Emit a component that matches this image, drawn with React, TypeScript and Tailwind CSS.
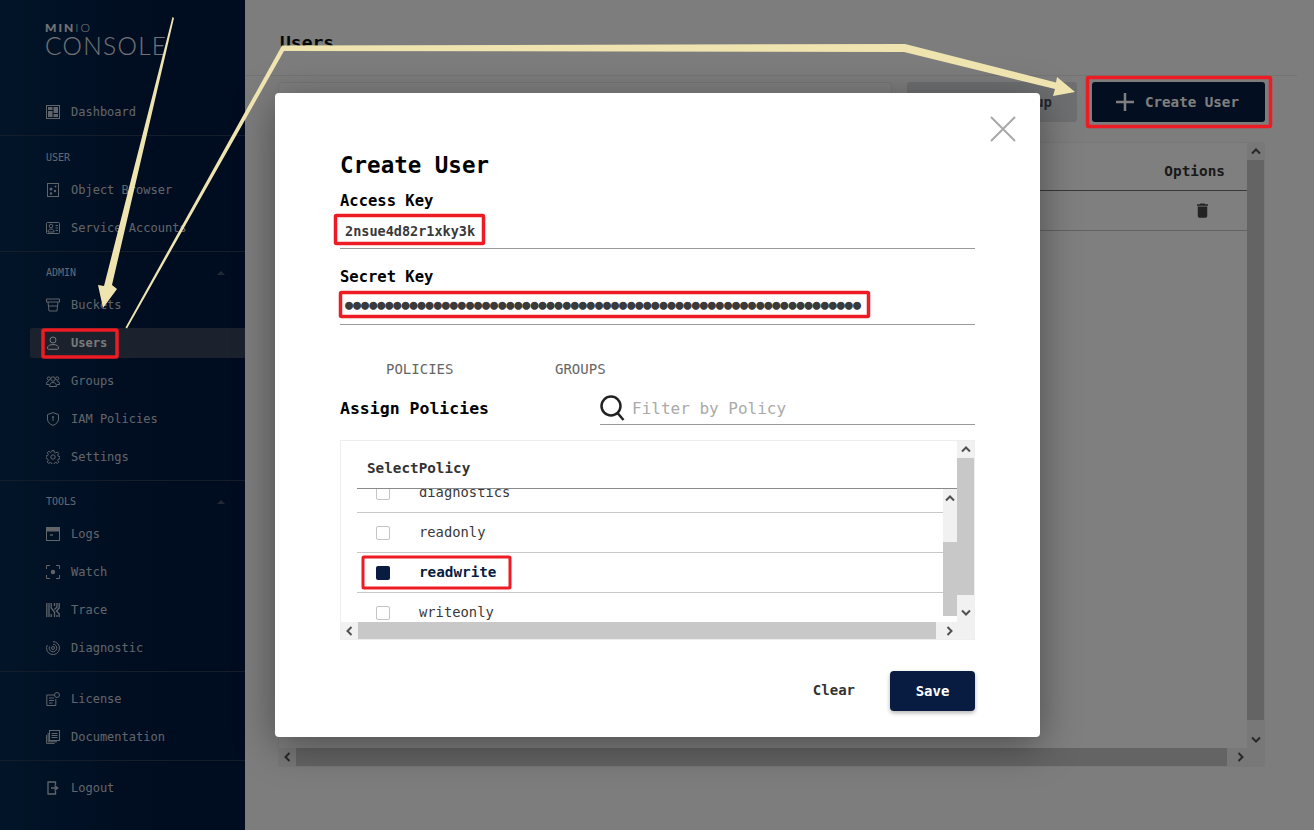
import React from "react";

const mono = "font-['DejaVu_Sans_Mono',monospace]";

const Ic = ({ children }: { children: React.ReactNode }) => (
  <svg viewBox="0 0 14 14" width="14" height="14" fill="none" stroke="currentColor" strokeWidth="1" className="shrink-0">
    {children}
  </svg>
);

const icons: Record<string, React.ReactNode> = {
  Dashboard: (<Ic><rect x="0.5" y="0.5" width="13" height="13" /><rect x="2" y="2" width="4.5" height="3" fill="currentColor" stroke="none" /><rect x="2" y="6" width="4.5" height="6" fill="currentColor" stroke="none" /><rect x="7.5" y="2" width="4.5" height="6" fill="currentColor" stroke="none" /><rect x="7.5" y="9" width="4.5" height="3" fill="currentColor" stroke="none" /></Ic>),
  "Object Browser": (<Ic><rect x="1.5" y="0.5" width="11" height="13" /><circle cx="5" cy="6" r="1.5" fill="currentColor" stroke="none" /><circle cx="9.5" cy="3.5" r="1" fill="currentColor" stroke="none" /><circle cx="9" cy="8" r="1.2" fill="currentColor" stroke="none" /><circle cx="5" cy="10.5" r="1.2" fill="currentColor" stroke="none" /></Ic>),
  "Service Accounts": (<Ic><rect x="0.5" y="1.5" width="13" height="11" rx="1" /><circle cx="5" cy="5" r="1.8" /><path d="M2 11c0-2 1.2-3 3-3s3 1 3 3z" /><path d="M9.5 4.5h2.5M9.5 7h2.5M9.5 9.5h2.5" /></Ic>),
  Buckets: (<Ic><path d="M0.5 1h13v3h-13zM2 4l1 9h8l1-9M2.5 8h9" /></Ic>),
  Users: (<Ic><circle cx="7" cy="4" r="3" /><path d="M2.5 13.3c-.8 0-1-.6-1-1.3 0-2 2-3.5 5.5-3.5s5.500 1.500 5.500 3.500c0 .7-.2 1.300-1 1.300z" /></Ic>),
  Groups: (<Ic><circle cx="7" cy="5" r="2.200" /><circle cx="2.800" cy="4.500" r="1.600" /><circle cx="11.200" cy="4.500" r="1.600" /><path d="M3.500 12.500c0-2.500 1.500-4 3.500-4s3.500 1.500 3.500 4zM3 10.500H.5c0-2 .8-3.500 2.500-3.500M11 10.500h2.500c0-2-.8-3.500-2.500-3.500" /></Ic>),
  "IAM Policies": (<Ic><path d="M7 .6l5.500 2v4.400c0 3-2.300 5.300-5.500 6.400-3.200-1.100-5.500-3.400-5.500-6.400V2.600z" /><circle cx="7" cy="5" r="1" fill="currentColor" stroke="none" /><path d="M7 6v3" /></Ic>),
  Settings: (<Ic><circle cx="7" cy="7" r="2.200" /><path d="M6 .6h2l.4 1.800 1.300.6 1.600-1 1.400 1.400-1 1.600.6 1.300 1.700.4v2l-1.700.4-.6 1.300 1 1.600-1.400 1.400-1.600-1-1.300.6-.4 1.700H6l-.4-1.700-1.300-.6-1.600 1-1.400-1.400 1-1.600-.6-1.300L0 8V6l1.700-.4.6-1.300-1-1.600 1.400-1.400 1.600 1 1.300-.6z" /></Ic>),
  Logs: (<Ic><rect x="0.500" y="0.500" width="13" height="13" /><rect x="0.500" y="0.500" width="13" height="3.500" fill="currentColor" /><path d="M4 8h3" strokeWidth="1.300" /></Ic>),
  Watch: (<Ic><path d="M4 .5H.5V4M10 .5h3.500V4M4 13.500H.5V10M10 13.500h3.500V10" /><circle cx="7" cy="7" r="2.200" fill="currentColor" stroke="none" /></Ic>),
  Trace: (<Ic><path d="M.8 0v14M3 0v14M5.200 0v5l3.300 4v5M5.200 14v-3M8.500 0v3M11 0v4L8.500 6.500M13.200 0v5L10.500 8l2.700 3v3M11 14v-2" strokeWidth="1.300" /></Ic>),
  Diagnostic: (<Ic><path d="M7 .6A6.500 6.500 0 1 1 1.300 4" /><path d="M7 3.200A3.800 3.800 0 1 1 3.500 5.500" /><circle cx="7" cy="7" r="1.500" /></Ic>),
  License: (<Ic><path d="M8.500 3H.8v10.500h9V7" /><path d="M3 6h5M3 8.500h5M3 11h3.500" /><circle cx="11" cy="3" r="2.500" /></Ic>),
  Documentation: (<Ic><rect x="3.500" y="0.500" width="10" height="10" /><path d="M5.500 3.500h6M5.500 5.500h6M5.500 7.500h6" /><path d="M2.200 3v8.800H11M.6 5v8.400h8" /></Ic>),
  Logout: (<Ic><path d="M9.500 4V1H2v12h7.500v-3" strokeWidth="1.300" /><path d="M5 7h6M8.500 4.500L11.500 7l-3 2.500" strokeWidth="1.500" /></Ic>),
};

const Item = ({ label, active }: { label: string; active?: boolean }) => (
  <div className="h-[38px] flex items-center">
    <div className={`ml-[30px] mt-[2px] flex-1 h-[30px] flex items-center gap-[11px] pl-[16px] rounded-l-[2px] ${active ? "bg-[#36445c] text-[#f2f2f2] font-bold" : "text-[#c2cad4]"}`}>
      {icons[label]}
      <span className="text-[12px]">{label}</span>
    </div>
  </div>
);

const Section = ({ title, caret, tall, items }: { title: string; caret?: boolean; tall?: boolean; items: string[] }) => (
  <div className="border-t border-[#2a3a55] pb-[5px]">
    <div className={`${tall ? "h-[34px]" : "h-[33px]"} pt-[8px] flex items-center justify-between pl-[46px] pr-[20px] text-[10px] text-[#c2d0e4]`}>
      <span>{title}</span>
      {caret && <span className="w-0 h-0 border-x-[4px] border-x-transparent border-b-[4px] border-b-[#44546e]" />}
    </div>
    {items.map((i) => (
      <Item key={i} label={i} active={i === "Users"} />
    ))}
  </div>
);

const Plain = ({ items }: { items: string[] }) => (
  <div className="border-t border-[#2a3a55] pt-[7px] pb-[5px]">
    {items.map((i) => (
      <Item key={i} label={i} />
    ))}
  </div>
);

const Chev = ({ dir }: { dir: "up" | "down" | "left" | "right" }) => {
  const d = { up: "M1 5.500L5 1.500l4 4", down: "M1 1.500l4 4 4-4", left: "M5.500 1L1.500 5l4 4", right: "M1.500 1l4 4-4 4" }[dir];
  const horizontal = dir === "left" || dir === "right";
  return (
    <svg viewBox={horizontal ? "0 0 7 10" : "0 0 10 7"} width={horizontal ? 7 : 10} height={horizontal ? 10 : 7} fill="none" stroke="#505050" strokeWidth="2">
      <path d={d} />
    </svg>
  );
};

const Page = () => (
  <div className="flex-1 bg-[#fbfafa] flex flex-col min-w-0">
    <div className="h-[76px] mr-[17px] border-b border-[#e8e8e8] pl-[35px] pt-[30px] shrink-0">
      <div className="text-[18px] leading-[26px] font-bold text-[#111]">Users</div>
    </div>
    <div className="mt-[6px] ml-[33px] h-[40px] flex shrink-0">
      <div className="w-[614px] border border-[#eaeaea] rounded-[4px] bg-white" />
      <div className="ml-[15px] w-[170px] rounded-[3px] bg-[#dcdee2] flex items-center justify-end pr-[25px] text-[14px] font-bold text-[#46505f]">
        Create Group
      </div>
      <div className="ml-[15px] w-[173px] rounded-[3px] bg-[#081c42] flex items-center pl-[24px] gap-[11px] font-bold text-white">
        <svg width="18" height="18" viewBox="0 0 18 18" stroke="#fff" strokeWidth="2.500"><path d="M9 0v18M0 9h18" /></svg>
        <span className="pt-[2px] text-[14.200px]">Create User</span>
      </div>
    </div>
    <div className="mt-[20px] ml-[33px] w-[987px] h-[625px] bg-white border border-[#f0f0f0] rounded-[2px] flex flex-col shrink-0">
      <div className="flex-1 flex min-h-0">
        <div className="flex-1">
          <div className="h-[48px] border-b border-[#707070] flex items-center justify-end pr-[22px] pt-[10px] text-[14.400px] font-bold text-[#333]">
            Options
          </div>
          <div className="h-[40px] border-b border-[#c4c4c4] flex items-center justify-end pr-[35px]">
            <svg viewBox="0 0 24 24" width="19" height="19" fill="#444"><path d="M6 19c0 1.100.9 2 2 2h8c1.100 0 2-.9 2-2V7H6v12zM19 4h-3.500l-1-1h-5l-1 1H5v2h14V4z" /></svg>
          </div>
        </div>
        <div className="w-[17px] flex flex-col bg-[#f1f1f1]">
          <div className="h-[17px] flex items-center justify-center"><Chev dir="up" /></div>
          <div className="flex-1 bg-[#c8c8c8]" />
          <div className="h-[28px] flex items-end justify-center pb-[5px]"><Chev dir="down" /></div>
        </div>
      </div>
      <div className="h-[18px] flex bg-[#f1f1f1] shrink-0">
        <div className="w-[17px] flex items-center justify-center"><Chev dir="left" /></div>
        <div className="w-[931px] bg-[#c8c8c8]" />
        <div className="w-[26px] flex items-center justify-center"><Chev dir="right" /></div>
      </div>
    </div>
  </div>
);

const Row = ({ name, on }: { name: string; on?: boolean }) => (
  <div className="h-[40px] border-b border-[#c8c8c8] flex items-center shrink-0">
    <span className={`ml-[19px] w-[14px] h-[14px] rounded-[2px] shrink-0 ${on ? "bg-[#081c42]" : "border border-[#c4c4c4]"}`} />
    <span className={`ml-[29px] ${on ? "font-bold text-[#081c42] text-[14.300px]" : "text-[#393939] text-[13.800px]"}`}>{name}</span>
  </div>
);

const Modal = () => (
  <div className="absolute left-[275px] top-[93px] w-[765px] h-[644px] bg-white rounded-[4px] shadow-[0_8px_40px_rgba(0,0,0,0.4)] px-[65px] pt-[59px] flex flex-col">
    <svg className="absolute right-[24px] top-[23px]" width="26" height="26" viewBox="0 0 26 26" stroke="#a8a8a8" strokeWidth="2"><path d="M1 1l24 24M25 1L1 25" /></svg>
    <div className="h-[28px] flex items-center text-[22.500px] font-bold text-black">Create User</div>
    <div className="mt-[12px] h-[20px] flex items-center text-[15.500px] font-bold text-black">Access Key</div>
    <div className="h-[37px] border-b border-[#9a9a9a] pl-[5px] pt-[3px] flex items-center text-[13.500px] font-bold text-[#393939]">2nsue4d82r1xky3k</div>
    <div className="mt-[19px] h-[20px] flex items-center text-[15.500px] font-bold text-black">Secret Key</div>
    <div className="h-[37px] border-b border-[#9a9a9a] pl-[5px] pb-[2px] flex items-center text-[13.400px] font-bold text-[#3a3a3a] overflow-hidden whitespace-nowrap">{"●".repeat(64)}</div>
    <div className="h-[40px] mt-[24px] flex items-center pl-[46px] text-[14px] text-[#666]">
      <span className="w-[169px]">POLICIES</span>
      <span>GROUPS</span>
    </div>
    <div className="h-[40px] -mt-[4px] flex items-end justify-between">
      <span className="text-[16.500px] font-bold text-black h-[33px] pt-[1px] flex items-center">Assign Policies</span>
      <div className="w-[375px] h-[33px] border-b border-[#9a9a9a] flex items-center">
        <svg width="25" height="26" viewBox="0 0 25 26" fill="none" stroke="#222" strokeWidth="2.500"><circle cx="11" cy="11" r="9.500" /><path d="M17.500 18l6 7" /></svg>
        <span className="ml-[7px] pt-[1px] text-[16px] text-[#aaa]">Filter by Policy</span>
      </div>
    </div>
    <div className="mt-[15px] h-[200px] border border-[#eeeeee] flex flex-col shrink-0">
      <div className="flex-1 flex min-h-0">
        <div className="flex-1 min-w-0 ml-[16px] flex flex-col">
          <div className="h-[48px] border-b border-[#8a8a8a] flex items-center pl-[10px] pt-[8px] text-[14.300px] font-bold text-[#333] shrink-0">SelectPolicy</div>
          <div className="flex-1 flex min-h-0">
            <div className="flex-1 overflow-hidden flex flex-col">
              <div className="-mt-[16px]">
                <Row name="diagnostics" />
                <Row name="readonly" />
                <Row name="readwrite" on />
                <Row name="writeonly" />
              </div>
            </div>
            <div className="w-[14px] flex flex-col">
              <div className="h-[53px] bg-[#f1f1f1] flex justify-center pt-[6px]"><Chev dir="up" /></div>
              <div className="h-[74px] bg-[#c8c8c8]" />
            </div>
          </div>
        </div>
        <div className="w-[17px] flex flex-col bg-[#f1f1f1] shrink-0">
          <div className="h-[17px] flex items-center justify-center"><Chev dir="up" /></div>
          <div className="h-[137px] bg-[#c8c8c8]" />
          <div className="flex-1 flex items-end justify-center pb-[6px]"><Chev dir="down" /></div>
        </div>
      </div>
      <div className="h-[17px] flex bg-[#f1f1f1] shrink-0">
        <div className="w-[17px] flex items-center justify-center"><Chev dir="left" /></div>
        <div className="w-[578px] bg-[#c8c8c8]" />
        <div className="w-[26px] flex items-center justify-center"><Chev dir="right" /></div>
      </div>
    </div>
    <div className="mt-[31px] flex justify-end items-center">
      <span className="mr-[35px] -mt-[2px] text-[14px] font-bold text-[#333]">Clear</span>
      <div className="w-[85px] h-[40px] rounded-[4px] bg-[#081c42] text-white text-[14px] font-bold flex items-center justify-center shadow-[0_2px_4px_rgba(0,0,0,0.3)]">Save</div>
    </div>
  </div>
);

const Marks = () => (
  <svg className="absolute inset-0" width="1314" height="830" viewBox="0 0 1314 830" fill="none">
    <g fill="#efe4b0">
      <polygon points="172.500,17 174,18 112,285 117,289 103,308 98,285 104,286" />
      <polygon points="125.500,327.500 282,45.500 905,44 1056,82.500 1057,77 1075,92 1053,96 1055,89 904,52 284,51 127,328.500" />
    </g>
    <g stroke="#ed1c24" strokeWidth="3.500">
      <rect x="1087.500" y="77.500" width="183" height="49" rx="1" />
      <rect x="43" y="330" width="74" height="27" rx="1" />
      <rect x="335.500" y="215.500" width="148" height="28" rx="1" />
      <rect x="340.500" y="292.500" width="528" height="24" rx="1" />
    </g>
    <rect x="363" y="557" width="147" height="31" rx="1" stroke="#ed1c24" strokeWidth="3" />
  </svg>
);

export default function App() {
  return (
    <div className={`relative w-[1314px] h-[830px] overflow-hidden flex ${mono}`}>
      <aside className="w-[245px] shrink-0 h-full bg-gradient-to-r from-[#052a50] via-[#021c44] to-[#001840] flex flex-col">
        <div className="h-[92px] pl-[45px] pt-[21px] font-['Lato',sans-serif] text-[#e2e6ea] shrink-0">
          <div className="text-[12px] leading-[13px] tracking-[2px]"><span className="font-black">MIN</span><span className="font-light">IO</span></div>
          <div className="text-[24.500px] leading-[24px] font-light tracking-[1.300px]">CONSOLE</div>
        </div>
        <div className="pb-[5px]">
          <Item label="Dashboard" />
        </div>
        <Section title="USER" tall items={["Object Browser", "Service Accounts"]} />
        <Section title="ADMIN" caret items={["Buckets", "Users", "Groups", "IAM Policies", "Settings"]} />
        <Section title="TOOLS" caret items={["Logs", "Watch", "Trace", "Diagnostic"]} />
        <Plain items={["License", "Documentation"]} />
        <Plain items={["Logout"]} />
      </aside>
      <Page />
      <div className="absolute inset-0 bg-black/50" />
      <Modal />
      <Marks />
    </div>
  );
}
